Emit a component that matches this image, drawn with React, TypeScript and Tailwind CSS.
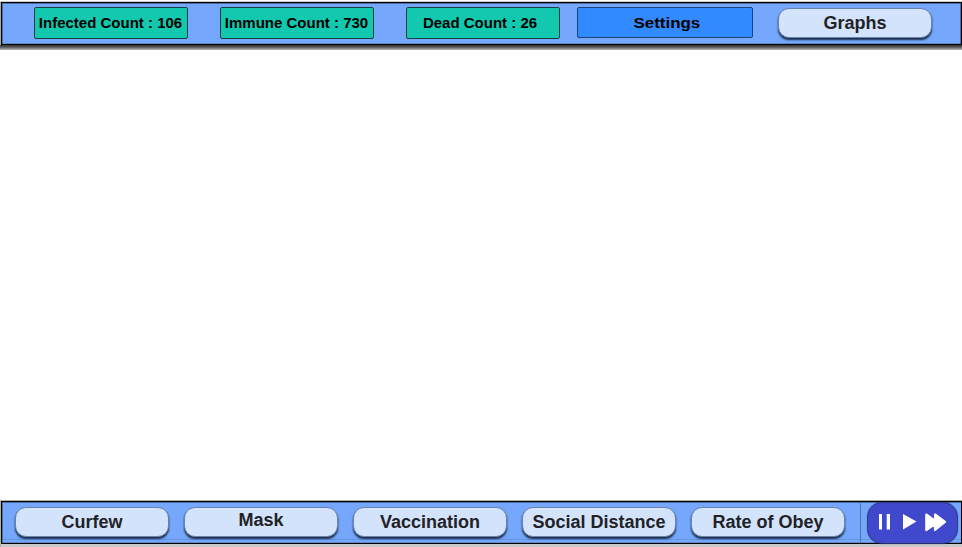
import React from 'react';

function Count({ children, shifted = false }: { children: React.ReactNode; shifted?: boolean }) {
  return (
    <div className="flex h-8 w-[154px] shrink-0 items-center justify-center whitespace-nowrap rounded-[2px] border border-[#173f3d] bg-[#12c8ae] text-[15px] leading-4 text-black">
      <span className={shifted ? 'pr-[6px]' : 'pr-px'}>{children}</span>
    </div>
  );
}

function Pill({ children, raised = false }: { children: React.ReactNode; raised?: boolean }) {
  return (
    <button className="flex h-[30px] w-[154px] shrink-0 items-center justify-center whitespace-nowrap rounded-[11px] border border-[#6883ad] bg-[#d4e3fc] text-[18px] leading-5 text-[#212225] shadow-[0_2px_2px_#1b2b47]">
      <span className={raised ? 'pb-1' : ''}>{children}</span>
    </button>
  );
}

export default function App() {
  return (
    <div className="flex h-[547px] w-[962px] flex-col justify-between overflow-hidden bg-white font-['Liberation_Sans',Arial,sans-serif] font-bold">
      <header className="h-[50px] bg-[linear-gradient(to_bottom,#fff_0px,#fff_1px,#ccc_1px,#ccc_2px,#aaa_2px,#aaa_45px,#333_45px,#555_47px,#999_49px,#bbb_50px)] pt-0.5 pl-px">
        <div className="flex h-[43px] w-[961px] items-start border border-black bg-[#75a8fc] pt-1 pl-8 shadow-[inset_0_1px_0_#4a6ba3,inset_1px_0_0_#4a6ba3,inset_-1px_0_0_#4a6ba3,inset_0_-1px_0_#5f88cc]">
          <div className="flex gap-8">
            <Count>Infected Count : 106</Count>
            <Count>Immune Count : 730</Count>
            <Count shifted>Dead Count : 26</Count>
          </div>
          <button className="ml-[17px] flex h-[31px] w-[176px] shrink-0 items-center justify-center rounded-[2px] border border-[#1b4276] bg-[#318aff] text-[15px] leading-4 text-black">
            <span className="inline-block scale-x-[1.13] pl-1">Settings</span>
          </button>
          <div className="mt-px ml-[25px]">
            <Pill>Graphs</Pill>
          </div>
        </div>
      </header>
      <footer className="h-[47px] border-t border-l border-[#aab4a5] bg-[#c9c9c9]">
        <div className="flex h-[43px] w-[961px] items-start border border-black bg-[#75a8fc] shadow-[inset_0_1px_0_#4a6ba3,inset_1px_0_0_#4a6ba3,inset_0_-1px_0_#5f88cc,inset_0_-3px_0_#75a8fc,inset_0_-4px_0_#6695e4]">
          <div className="flex gap-[15px] pt-[5px] pl-[13px]">
            <Pill>Curfew</Pill>
            <Pill raised>Mask</Pill>
            <Pill>Vaccination</Pill>
            <Pill>Social Distance</Pill>
            <Pill>Rate of Obey</Pill>
          </div>
          <div className="ml-[15px] h-[41px] w-px shrink-0 bg-[#4e72aa]" />
          <div className="mt-px ml-[7px] h-10 w-[89px] shrink-0 rounded-[14px] bg-[#4048cc] shadow-[0_0_1px_1px_#28347c]">
            <svg viewBox="0 0 89 40" className="block h-10 w-[89px]" fill="white">
              <path d="M11 11h3v15.500h-3zM18.700 11h3.300v15.500h-3.300z" />
              <path d="M35 11l13.500 7.500L35 26.500z" />
              <path d="M58.300 11.500L67 18v-6.500L77 19l-10 8v-6l-8.700 6z" stroke="white" strokeWidth="2.200" strokeLinejoin="round" />
            </svg>
          </div>
        </div>
      </footer>
    </div>
  );
}
